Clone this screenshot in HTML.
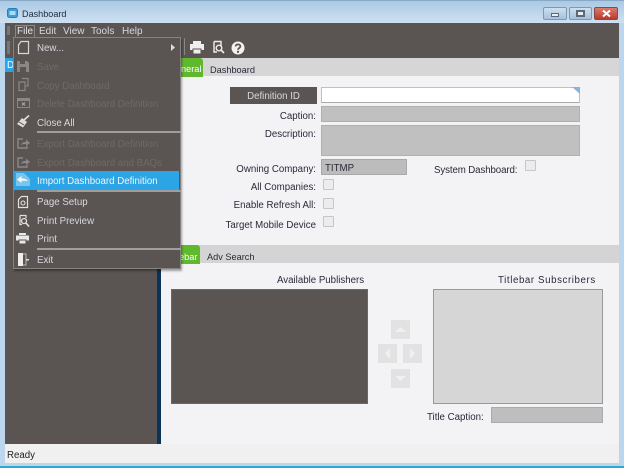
<!DOCTYPE html>
<html><head><meta charset="utf-8"><style>
*{box-sizing:border-box}
html,body{margin:0;padding:0;width:624px;height:468px;overflow:hidden;background:#bcd6ee}
#w{position:absolute;left:0;top:0;width:624px;height:468px;overflow:hidden;background:#bcd6ee;font-family:"Liberation Sans",sans-serif;font-size:9.7px;color:#2c2838;filter:blur(.35px)}
.a{position:absolute}
.t{position:absolute;white-space:nowrap;line-height:12px}
.r{text-align:right}
.m{position:absolute;left:37px;color:#d8d8e0;white-space:nowrap;line-height:12px;font-size:9.7px}
.d{color:#6e6a68}
.s{position:absolute;left:37px;width:144px;height:2px;background:#a09e9c}
.c{position:absolute;width:11px;height:11px;background:#ececec;border:1px solid #c6c6c6;border-radius:1px}
.b{position:absolute;width:19px;height:19px;background:#e2e2e2}
svg{position:absolute;overflow:visible}
</style></head><body><div id="w">
<div class="a" style="left:0;top:0;width:624px;height:23px;background:linear-gradient(#a9c8e4,#cfe1f2)"></div>
<div class="a" style="left:0;top:0;width:624px;height:1px;background:#8aa9c5"></div>
<svg style="left:7px;top:8px" width="11" height="10"><rect x=".5" y=".5" width="10" height="9" rx="2" fill="#3a9fd8" stroke="#2a7fb0"/><rect x="2.500" y="3" width="6" height="4" fill="#a8dcf5"/></svg>
<div class="t" style="left:22px;top:8px;font-size:9.1px;color:#1c2c3c">Dashboard</div>
<div class="a" style="left:543px;top:7px;width:24px;height:13px;background:linear-gradient(#cfe0f0,#a4c1dc);border:1px solid #8298ad;border-radius:2px"></div>
<div class="a" style="left:551px;top:13px;width:8px;height:4px;background:#e8eef4;border:1px solid #5a6a7a"></div>
<div class="a" style="left:569px;top:7px;width:23px;height:13px;background:linear-gradient(#cfe0f0,#a4c1dc);border:1px solid #8298ad;border-radius:2px"></div>
<div class="a" style="left:576px;top:10px;width:9px;height:7px;background:#e8eef4;border:2px solid #5a6a7a"></div>
<div class="a" style="left:594px;top:7px;width:24px;height:13px;background:linear-gradient(#dc7a6c,#bb3b2e);border:1px solid #8a4a44;border-radius:2px"></div>
<svg style="left:602px;top:10px" width="9" height="7"><path d="M1 .5L8 6.500M8 .5L1 6.500" stroke="#fff" stroke-width="2"/></svg>

<div class="a" style="left:5px;top:23px;width:614px;height:35px;background:#5a5553"></div>
<div class="a" style="left:5px;top:58px;width:155px;height:386px;background:#5a5553"></div>
<div class="a" style="left:5px;top:58px;width:8px;height:14px;background:#2ba5e6"></div>
<div class="t" style="left:7px;top:60px;color:#fff">D</div>
<div class="a" style="left:157px;top:58px;width:4px;height:386px;background:#0a3358"></div>
<div class="a" style="left:161px;top:58px;width:458px;height:386px;background:#f3f3f6"></div>
<div class="a" style="left:161px;top:58px;width:458px;height:18px;background:#d6d6d6"></div>
<div class="a" style="left:161px;top:58px;width:42px;height:19px;background:#60b82c;border-radius:0 3px 0 0"></div>
<div class="t" style="left:181px;top:63px;color:#fff;font-size:9.2px">neral</div>
<div class="t" style="left:210px;top:64px;font-size:9.2px">Dashboard</div>

<svg style="left:190px;top:41px" width="14" height="13"><rect x="3" y="0" width="8" height="3" fill="#eee"/><rect x="0" y="3" width="14" height="6" fill="#eee"/><rect x="3" y="8" width="8" height="5" fill="#eee" stroke="#5a5553"/></svg>
<svg style="left:212px;top:41px" width="12" height="13"><path d="M2 .5H9V5M2 .5V11H5" fill="none" stroke="#eee" stroke-width="1.400"/><circle cx="7" cy="7" r="2.800" fill="none" stroke="#eee" stroke-width="1.400"/><path d="M9 9L12 12" stroke="#eee" stroke-width="1.600"/></svg>
<svg style="left:231px;top:41px" width="14" height="14"><circle cx="7" cy="7" r="6.500" fill="#f2f2f2"/><path d="M4.600 5.400C4.800 2.600 9.400 2.800 9.400 5.400C9.400 7 7 7 7 8.800" fill="none" stroke="#5a5553" stroke-width="1.800"/><rect x="6" y="9.800" width="2" height="2" fill="#5a5553"/></svg>

<div class="a" style="left:230px;top:87px;width:87px;height:17px;background:#5a5553"></div>
<div class="t" style="left:230px;top:91px;width:87px;text-align:center;color:#d8d8dc">Definition ID</div>
<div class="a" style="left:321px;top:87px;width:259px;height:16px;background:#fff;border:1px solid #c0c0c0;border-bottom:1px solid #aaa"></div>
<svg style="left:572px;top:87px" width="8" height="7"><path d="M0 0H8V7Z" fill="#8cb2dc"/></svg>
<div class="a" style="left:321px;top:106px;width:259px;height:16px;background:#c0c0c0;border:1px solid #b0b0b0"></div>
<div class="a" style="left:321px;top:125px;width:259px;height:31px;background:#c0c0c0;border:1px solid #b0b0b0"></div>
<div class="a" style="left:321px;top:159px;width:86px;height:16px;background:#bcbcbc;border:1px solid #a8a8a8"></div>
<div class="t" style="left:325px;top:163px">TITMP</div>

<div class="t r" style="left:200px;width:116px;top:111px">Caption:</div>
<div class="t r" style="left:200px;width:116px;top:129px">Description:</div>
<div class="t r" style="left:200px;width:116px;top:164px">Owning Company:</div>
<div class="t r" style="left:200px;width:116px;top:182px">All Companies:</div>
<div class="t r" style="left:200px;width:116px;top:200px">Enable Refresh All:</div>
<div class="t r" style="left:200px;width:116px;top:220px">Target Mobile Device</div>
<div class="t" style="left:434px;top:165px;letter-spacing:-.1px">System Dashboard:</div>
<div class="c" style="left:323px;top:179px"></div>
<div class="c" style="left:323px;top:198px"></div>
<div class="c" style="left:323px;top:216px"></div>
<div class="c" style="left:525px;top:160px"></div>

<div class="a" style="left:161px;top:245px;width:458px;height:18px;background:#d4d4d4"></div>
<div class="a" style="left:161px;top:245px;width:39px;height:19px;background:#60b82c;border-radius:0 3px 0 0"></div>
<div class="t" style="left:179px;top:251px;color:#fff;font-size:9.2px">ebar</div>
<div class="t" style="left:207px;top:251px;font-size:9.2px">Adv Search</div>

<div class="t" style="left:277px;top:275px">Available Publishers</div>
<div class="t" style="left:498px;top:275px;letter-spacing:.6px">Titlebar Subscribers</div>
<div class="a" style="left:171px;top:289px;width:197px;height:115px;background:#5a5553;border:1px solid #6c6866"></div>
<div class="a" style="left:433px;top:289px;width:170px;height:115px;background:#d6d6d6;border:1px solid #999"></div>

<div class="b" style="left:391px;top:320px"></div>
<svg style="left:391px;top:320px" width="19" height="19"><path d="M4 12H15L9.500 7Z" fill="#f0f0f0"/></svg>
<div class="b" style="left:378px;top:344px"></div>
<svg style="left:378px;top:344px" width="19" height="19"><path d="M12 4V15L7 9.500Z" fill="#f0f0f0"/></svg>
<div class="b" style="left:403px;top:344px"></div>
<svg style="left:403px;top:344px" width="19" height="19"><path d="M7 4V15L12 9.500Z" fill="#f0f0f0"/></svg>
<div class="b" style="left:391px;top:369px"></div>
<svg style="left:391px;top:369px" width="19" height="19"><path d="M4 7H15L9.500 12Z" fill="#f0f0f0"/></svg>

<div class="t" style="left:427px;top:412px">Title Caption:</div>
<div class="a" style="left:491px;top:407px;width:112px;height:16px;background:#bebebe;border:1px solid #aaa"></div>

<div class="a" style="left:5px;top:444px;width:614px;height:19px;background:#f0f0f0"></div>
<div class="t" style="left:7px;top:450px;color:#222">Ready</div>
<div class="a" style="left:0;top:466px;width:624px;height:2px;background:#30a8cc"></div>

<div class="a" style="left:5px;top:23px;width:614px;height:14px;background:#5a5553"></div>
<div class="a" style="left:15px;top:25px;width:20px;height:12px;border:1px solid #8a8886;border-bottom:0"></div>
<div class="t" style="left:17px;top:26px;color:#e4e4ea;font-size:10px">File</div>
<div class="t" style="left:39px;top:26px;color:#d8d8e0;font-size:10px">Edit</div>
<div class="t" style="left:63px;top:26px;color:#d8d8e0;font-size:10px">View</div>
<div class="t" style="left:91px;top:26px;color:#d8d8e0;font-size:10px">Tools</div>
<div class="t" style="left:122px;top:26px;color:#d8d8e0;font-size:10px">Help</div>
<div class="a" style="left:7px;top:26px;width:3px;height:9px;background:#777"></div>
<div class="a" style="left:7px;top:41px;width:3px;height:13px;background:#777"></div>
<div class="a" style="left:184px;top:38px;width:1px;height:17px;background:#8a8886"></div>

<div class="a" style="left:13px;top:37px;width:168px;height:232px;background:#5a5553;border:1px solid #85827f;box-shadow:1px 2px 2px rgba(0,0,0,.35)"></div>
<div class="a" style="left:14px;top:171px;width:165px;height:19px;background:#2ba5e6"></div>
<div class="s" style="top:131px"></div><div class="s" style="top:190px"></div><div class="s" style="top:248px"></div>
<div class="m" style="top:43px">New...</div>
<svg style="left:171px;top:44px" width="5" height="7"><path d="M0 0V7L4 3.500Z" fill="#ddd"/></svg>
<div class="m d" style="top:62px">Save</div>
<div class="m d" style="top:81px">Copy Dashboard</div>
<div class="m d" style="top:99px">Delete Dashboard Definition</div>
<div class="m" style="top:118px">Close All</div>
<div class="m d" style="top:139px">Export Dashboard Definition</div>
<div class="m d" style="top:158px">Export Dashboard and BAQs</div>
<div class="m" style="top:176px;color:#f2f4fa">Import Dashboard Definition</div>
<div class="m" style="top:197px">Page Setup</div>
<div class="m" style="top:216px">Print Preview</div>
<div class="m" style="top:234px">Print</div>
<div class="m" style="top:255px">Exit</div>

<svg style="left:17px;top:41px" width="13" height="13"><path d="M4 .5H11.500V12.500H1.500V4Z" fill="none" stroke="#d8d8d8" stroke-width="1.200"/></svg>
<svg style="left:17px;top:61px" width="12" height="11"><path d="M0 0H10L12 2V11H0Z" fill="#8a8886"/><rect x="3" y="0" width="5" height="3" fill="#5a5553"/><rect x="3" y="6" width="6" height="5" fill="#5a5553"/></svg>
<svg style="left:17px;top:78px" width="13" height="13"><path d="M5 .5H11V8H9M2 4H8V12.500H2Z" fill="none" stroke="#8a8886" stroke-width="1.200"/></svg>
<svg style="left:17px;top:98px" width="13" height="10"><rect x=".5" y=".5" width="12" height="9" fill="none" stroke="#8a8886"/><rect x="0" y="0" width="13" height="3" fill="#8a8886"/><path d="M5 4.500L8 7.500M8 4.500L5 7.500" stroke="#aaa"/></svg>
<svg style="left:16px;top:115px" width="14" height="13"><path d="M13 .5L8 5" stroke="#e0e0e0" stroke-width="1.600"/><path d="M6 3L11 7L7 12.500L1 9Z" fill="#dcdcdc"/><path d="M3 7L8 10" stroke="#5a5553"/></svg>
<svg style="left:17px;top:138px" width="13" height="11"><path d="M6 1H1V10H10V8" fill="none" stroke="#8a8886" stroke-width="1.400"/><path d="M4 7C5 4 7 4 9 4V1.500L13 5L9 8V6C7 6 6 6 4 7Z" fill="#8a8886"/></svg>
<svg style="left:17px;top:157px" width="13" height="11"><path d="M6 1H1V10H10V8" fill="none" stroke="#8a8886" stroke-width="1.400"/><path d="M4 7C5 4 7 4 9 4V1.500L13 5L9 8V6C7 6 6 6 4 7Z" fill="#8a8886"/></svg>
<svg style="left:15px;top:172px" width="15" height="15"><path d="M1 1H9L15 7V14H1Z" fill="#7cc4ea"/><path d="M13 9C10 6 8 6.500 6.500 6.500V4L2 7.500L6.500 11V9C9 8.500 11 9 13 9Z" fill="#f4f8fc"/></svg>
<svg style="left:18px;top:196px" width="10" height="12"><path d="M3.500 .5H9.500V11.500H.5V3.500Z" fill="none" stroke="#e0e0e0" stroke-width="1.200"/><circle cx="5" cy="7" r="2" fill="none" stroke="#e0e0e0" stroke-width="1.100"/></svg>
<svg style="left:18px;top:215px" width="11" height="12"><path d="M2 .5H8V3M2 .5V9.500H4" fill="none" stroke="#e0e0e0" stroke-width="1.200"/><circle cx="6" cy="6" r="2.500" fill="none" stroke="#e0e0e0" stroke-width="1.300"/><path d="M8 8L11 11.500" stroke="#e0e0e0" stroke-width="1.600"/></svg>
<svg style="left:16px;top:233px" width="13" height="11"><rect x="3" y="0" width="7" height="2" fill="#e8e8e8"/><rect x="0" y="2.500" width="13" height="5" fill="#e8e8e8"/><rect x="3" y="7" width="7" height="4" fill="#e8e8e8" stroke="#5a5553"/></svg>
<svg style="left:18px;top:253px" width="11" height="13"><path d="M0 0H5V13H0Z" fill="#eee"/><path d="M5 1H8V12H5" fill="none" stroke="#bbb"/><rect x="8" y="6" width="3" height="1.500" fill="#ddd"/></svg>
</div></body></html>
